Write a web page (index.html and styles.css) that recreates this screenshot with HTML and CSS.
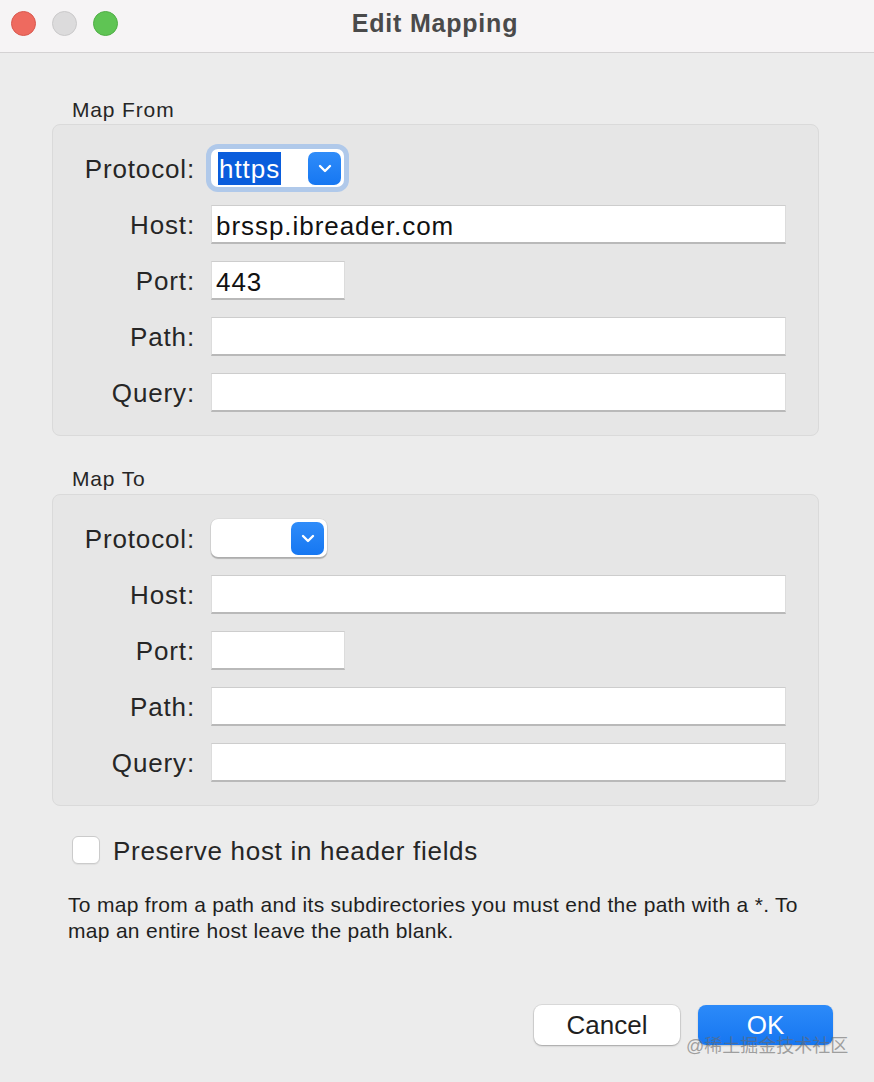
FILE: index.html
```html
<!DOCTYPE html>
<html lang="en">
<head>
<meta charset="utf-8">
<title>Edit Mapping</title>
<link rel="stylesheet" href="styles.css">
</head>
<body>
<div class="window">
  <header class="titlebar">
    <div class="lights">
      <span class="light red"></span>
      <span class="light gray"></span>
      <span class="light green"></span>
    </div>
    <h1 class="title">Edit Mapping</h1>
  </header>

  <main class="content">
    <section class="group first">
      <div class="group-title">Map From</div>
      <div class="box">
        <div class="row">
          <span class="label">Protocol:</span>
          <div class="popup wide focused">
            <span class="popup-value"><span class="selected">https</span></span>
            <span class="popup-btn"><svg width="14" height="9" viewBox="0 0 14 9"><path d="M2 2 L7 7 L12 2" fill="none" stroke="#fff" stroke-width="2.4" stroke-linecap="round" stroke-linejoin="round"/></svg></span>
          </div>
        </div>
        <div class="row">
          <span class="label">Host:</span>
          <div class="field long">brssp.ibreader.com</div>
        </div>
        <div class="row">
          <span class="label">Port:</span>
          <div class="field short">443</div>
        </div>
        <div class="row">
          <span class="label">Path:</span>
          <div class="field long"></div>
        </div>
        <div class="row">
          <span class="label">Query:</span>
          <div class="field long"></div>
        </div>
      </div>
    </section>

    <section class="group second">
      <div class="group-title">Map To</div>
      <div class="box">
        <div class="row">
          <span class="label">Protocol:</span>
          <div class="popup narrow">
            <span class="popup-value"></span>
            <span class="popup-btn"><svg width="14" height="9" viewBox="0 0 14 9"><path d="M2 2 L7 7 L12 2" fill="none" stroke="#fff" stroke-width="2.4" stroke-linecap="round" stroke-linejoin="round"/></svg></span>
          </div>
        </div>
        <div class="row">
          <span class="label">Host:</span>
          <div class="field long"></div>
        </div>
        <div class="row">
          <span class="label">Port:</span>
          <div class="field short"></div>
        </div>
        <div class="row">
          <span class="label">Path:</span>
          <div class="field long"></div>
        </div>
        <div class="row">
          <span class="label">Query:</span>
          <div class="field long"></div>
        </div>
      </div>
    </section>

    <div class="check-row">
      <span class="checkbox"></span>
      <span class="check-label">Preserve host in header fields</span>
    </div>

    <p class="help">To map from a path and its subdirectories you must end the path with a *. To<br>map an entire host leave the path blank.</p>

    <div class="buttons">
      <button class="btn cancel">Cancel</button>
      <button class="btn ok">OK</button>
    </div>
  </main>
  <div class="watermark">@稀土掘金技术社区</div>
</div>
</body>
</html>
```

FILE: styles.css
```css
* { box-sizing: border-box; }
html, body {
  margin: 0;
  padding: 0;
  background: #ececec;
}
body {
  font-family: "Liberation Sans", Arial, sans-serif;
  color: #222;
}
.window {
  position: relative;
  width: 874px;
  height: 1082px;
  background: #ececec;
  overflow: hidden;
}
.titlebar {
  height: 53px;
  background: #f6f4f5;
  border-bottom: 1px solid #d4d2d3;
  display: flex;
  align-items: center;
  position: relative;
}
.lights {
  display: flex;
  gap: 16px;
  padding-left: 11px;
  margin-top: -5px;
}
.light {
  width: 25px;
  height: 25px;
  border-radius: 50%;
  display: block;
}
.red { background: #ee6a5f; border: 1px solid #d9594f; }
.gray { background: #dcdbdc; border: 1px solid #cac9ca; }
.green { background: #5fc454; border: 1px solid #50ae46; }
.title {
  position: absolute;
  left: 0;
  right: 0;
  top: 0;
  margin: 0;
  text-align: center;
  font-size: 25px;
  font-weight: bold;
  letter-spacing: 0.8px;
  line-height: 46px;
  color: #4a4a4a;
  padding-right: 4px;
}
.content {
  padding: 0 55px 0 52px;
}
.group-title {
  font-size: 21px;
  letter-spacing: 0.85px;
  height: 30px;
  line-height: 30px;
  padding-left: 20px;
  color: #262626;
}
.group.first { margin-top: 42px; }
.group.second { margin-top: 28px; }
.group.first .box { margin-top: -1px; }
.box {
  background: #e6e6e6;
  border: 1px solid #dadada;
  border-radius: 8px;
  padding: 15px 32px 15px 0;
}
.row {
  height: 56px;
  display: flex;
  align-items: center;
  gap: 16px;
}
.label {
  width: 142px;
  text-align: right;
  font-size: 26px;
  letter-spacing: 0.85px;
  color: #262626;
  padding-top: 3px;
}
.field {
  height: 39px;
  background: #fff;
  border-top: 1px solid #cdcdcd;
  border-left: 1px solid #dcdcdc;
  border-right: 1px solid #dcdcdc;
  border-bottom: 2px solid #b9b9b9;
  font-size: 26px;
  letter-spacing: 0.95px;
  line-height: 41px;
  padding-left: 4px;
  color: #111;
}
.field.long { flex: 1; }
.field.short { width: 134px; }
.popup {
  height: 38px;
  background: #fff;
  border-radius: 7px;
  box-shadow: 0 0.5px 0 1px rgba(0,0,0,0.08), 0 1.5px 1px rgba(0,0,0,0.18);
  display: flex;
  align-items: center;
  justify-content: space-between;
  padding: 0 3px 0 7px;
}
.popup.wide { width: 133px; }
.popup.narrow { width: 116px; }
.popup.focused {
  box-shadow: 0 0 0 5px #b0c9ea, 0 1px 1px rgba(0,0,0,0.15);
}
.popup-value {
  font-size: 26px;
  letter-spacing: 0.95px;
  color: #fff;
  height: 33px;
  display: flex;
  align-items: center;
}
.selected {
  background: #0a5ddc;
  color: #fff;
  padding: 0 1px;
  line-height: 35px;
  display: inline-block;
  height: 33px;
  overflow: hidden;
}
.popup-btn {
  width: 33px;
  height: 33px;
  border-radius: 7px;
  background: linear-gradient(#2f8cf9, #1677f2);
  display: flex;
  align-items: center;
  justify-content: center;
}
.check-row {
  display: flex;
  align-items: center;
  gap: 13px;
  margin-top: 29px;
  padding-left: 20px;
  height: 30px;
}
.checkbox {
  width: 28px;
  height: 28px;
  background: #fff;
  border: 1px solid #cbcbcb;
  border-radius: 6px;
  box-shadow: 0 1px 1px rgba(0,0,0,0.06);
}
.check-label {
  font-size: 26px;
  letter-spacing: 0.7px;
  color: #262626;
  padding-top: 2px;
}
.help {
  margin: 27px 0 0 16px;
  font-size: 21px;
  letter-spacing: 0.3px;
  line-height: 26px;
  color: #1f1f1f;
  white-space: nowrap;
}
.buttons {
  display: flex;
  justify-content: flex-end;
  gap: 18px;
  margin-top: 61px;
  margin-right: -14px;
}
.btn {
  height: 40px;
  border: none;
  border-radius: 8px;
  font-family: "Liberation Sans", Arial, sans-serif;
  font-size: 26px;
  padding: 0;
}
.cancel {
  width: 146px;
  background: #fff;
  color: #1f1f1f;
  box-shadow: 0 0 0 1px rgba(0,0,0,0.07), 0 1px 2px rgba(0,0,0,0.25);
}
.ok {
  width: 135px;
  background: linear-gradient(#2c8af9, #1676f1);
  color: #fff;
  box-shadow: 0 1px 2px rgba(0,0,0,0.2);
}
.watermark {
  position: absolute;
  left: 686px;
  top: 1031px;
  font-family: "Liberation Sans", "Noto Sans CJK SC", sans-serif;
  font-size: 18px;
  color: rgba(105,105,105,0.6);
  pointer-events: none;
}
```
